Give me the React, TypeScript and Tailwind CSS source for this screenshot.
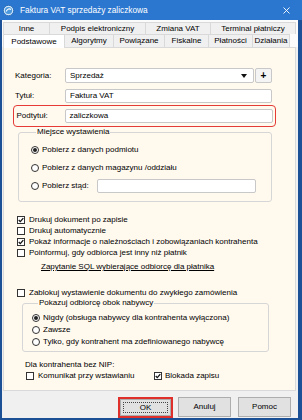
import React from "react";

const Check = ({ checked }: { checked?: boolean }) => (
  <span className="w-[8px] h-[8px] border border-[#333] bg-white flex items-center justify-center shrink-0">
    {checked && (
      <svg width="6" height="6" viewBox="0 0 6 6">
        <path d="M0.7 3 L2.3 4.6 L5.3 1.1" fill="none" stroke="#111" strokeWidth="1.3" />
      </svg>
    )}
  </span>
);

const Radio = ({ checked }: { checked?: boolean }) => (
  <span className="w-[8px] h-[8px] rounded-full border border-[#333] bg-white flex items-center justify-center shrink-0">
    {checked && <span className="w-[4px] h-[4px] rounded-full bg-[#222]" />}
  </span>
);

const Tab = ({ label, w, last, active }: { label: string; w: string; last?: boolean; active?: boolean }) => (
  <div
    className={
      "flex items-center justify-center border-t border-l border-[#d9d9d9] " +
      w +
      (last ? " border-r" : "") +
      (active ? " h-[14px] bg-white relative z-10" : " h-full bg-[#f0f0f0]")
    }
  >
    {label}
  </div>
);

const Button = ({ label, focused }: { label: string; focused?: boolean }) => (
  <div
    className={
      "bg-[#e1e1e1] border border-[#adadad] flex " +
      (focused ? "w-[51px] h-[17px] p-[2px]" : "w-[53px] h-[20px]")
    }
  >
    <div className={"flex-1 flex items-center justify-center " + (focused ? "border border-dotted border-[#444]" : "")}>
      {label}
    </div>
  </div>
);

export default function App() {
  return (
    <div className="w-[302px] h-[420px] bg-[#1b4f96] flex flex-col font-['Liberation_Sans',Arial,sans-serif] text-[8px] leading-none text-black">
      {/* title bar */}
      <div className="h-[20px] bg-[#2b77d0] flex items-center pl-[3px] pr-[12px] text-white">
        <svg width="11" height="11" viewBox="0 0 11 11">
          <circle cx="5.5" cy="5.5" r="5.2" fill="#cfe6fb" stroke="#1d5ea8" strokeWidth="0.8" />
          <circle cx="5.5" cy="5.5" r="3.6" fill="#4a97dc" />
          <path d="M3 6.5 Q5.5 2.5 8 4.5" fill="none" stroke="#fff" strokeWidth="1.1" />
        </svg>
        <span className="ml-[6px] text-[8.3px]">Faktura VAT sprzedaży zaliczkowa</span>
        <svg className="ml-auto" width="7" height="7" viewBox="0 0 7 7">
          <path d="M0.5 0.5 L6.5 6.5 M6.5 0.5 L0.5 6.5" stroke="#fff" strokeWidth="0.9" />
        </svg>
      </div>

      <div className="flex-1 ml-[2px] mr-[4px] mb-[2px] bg-[#f0f0f0] flex flex-col">
        {/* tabs */}
        <div className="h-[27px] bg-[#fbfbfb] pl-[1px] pt-[2px] flex flex-col">
          <div className="h-[12px] flex">
            <Tab label="Inne" w="w-[46px]" />
            <Tab label="Podpis elektroniczny" w="w-[96px]" />
            <Tab label="Zmiana VAT" w="w-[65px]" />
            <Tab label="Terminal płatniczy" w="w-[86px]" last />
          </div>
          <div className="h-[13px] flex items-start">
            <Tab label="Podstawowe" w="w-[61px]" active />
            <Tab label="Algorytmy" w="w-[49px]" />
            <Tab label="Powiązane" w="w-[51px]" />
            <Tab label="Fiskalne" w="w-[44px]" />
            <Tab label="Płatności" w="w-[44px]" />
            <Tab label="Działania" w="w-[38px]" last />
          </div>
        </div>

        {/* panel */}
        <div className="ml-[1px] mr-[2px] h-[344px] border border-[#d9d9d9] bg-[#fff9ee] flex flex-col">
          <div className="ml-[9px] w-[263px] flex flex-col">
            <div className="mt-[20px] h-[15px] flex items-center pr-[4px]">
              <div className="w-[52px] pl-[2px]">Kategoria:</div>
              <div className="flex-1 h-full bg-white border border-[#c8c8c8] rounded-[2px] flex items-center pl-[4px] pr-[6px]">
                <span>Sprzedaż</span>
                <svg className="ml-auto" width="6" height="4" viewBox="0 0 6 4">
                  <path d="M0 0 H6 L3 4 Z" fill="#111" />
                </svg>
              </div>
              <div className="ml-[1px] w-[17px] h-full bg-[#f4f4f4] border border-[#c8c8c8] rounded-[2px] flex items-center justify-center font-bold text-[10px]">
                +
              </div>
            </div>

            <div className="mt-[6px] h-[14px] flex items-center pr-[4px]">
              <div className="w-[52px] pl-[2px]">Tytuł:</div>
              <div className="flex-1 h-full bg-white border border-[#c8c8c8] rounded-[2px] flex items-center pl-[4px]">
                Faktura VAT
              </div>
            </div>

            <div className="mt-[2px] h-[22px] flex items-center border-[1.5px] border-[#e53a35] rounded-[4px] pr-[2.5px]">
              <div className="w-[50.5px] pl-[2.5px]">Podtytuł:</div>
              <div className="flex-1 h-[14px] bg-white border border-[#c8c8c8] rounded-[2px] flex items-center pl-[4px]">
                zaliczkowa
              </div>
            </div>

            <fieldset className="ml-[5px] mr-[4px] border border-[#d6d6d6] rounded-[3px] pl-[12px] pr-[15px] pt-[6px] pb-[8px] flex flex-col gap-[4px]">
              <legend className="ml-[5px] px-[1px] leading-[10px]">Miejsce wystawienia</legend>
              <div className="h-[14px] flex items-center gap-[3px]">
                <Radio checked />
                <span>Pobierz z danych podmiotu</span>
              </div>
              <div className="h-[14px] flex items-center gap-[3px]">
                <Radio />
                <span>Pobierz z danych magazynu /oddziału</span>
              </div>
              <div className="h-[14px] flex items-center gap-[3px]">
                <Radio />
                <span>Pobierz stąd:</span>
                <div className="ml-auto w-[159px] h-full bg-white border border-[#c8c8c8] rounded-[2px]" />
              </div>
            </fieldset>

            <div className="mt-[12px] pl-[4px] flex flex-col">
              <div className="h-[11px] flex items-center gap-[4px]">
                <Check checked />
                <span>Drukuj dokument po zapisie</span>
              </div>
              <div className="h-[11px] flex items-center gap-[4px]">
                <Check />
                <span>Drukuj automatycznie</span>
              </div>
              <div className="h-[11px] flex items-center gap-[4px]">
                <Check checked />
                <span>Pokaż informacje o należnościach i zobowiązaniach kontrahenta</span>
              </div>
              <div className="h-[11px] flex items-center gap-[4px]">
                <Check />
                <span>Poinformuj, gdy odbiorca jest inny niż płatnik</span>
              </div>
            </div>

            <div className="mt-[4px] h-[10px] pl-[28px] flex items-center">
              <span className="underline">Zapytanie SQL wybierające odbiorcę dla płatnika</span>
            </div>

            <div className="mt-[16px] h-[10px] pl-[4px] flex items-center gap-[4px]">
              <Check />
              <span>Zablokuj wystawienie dokumentu do zwykłego zamówienia</span>
            </div>

            <fieldset className="ml-[9px] mr-[7px] border border-[#d6d6d6] rounded-[3px] pl-[9px] pt-[4px] pb-[3px] flex flex-col">
              <legend className="ml-[6px] px-[1px] leading-[10px]">Pokazuj odbiorcę obok nabywcy</legend>
              <div className="h-[12px] flex items-center gap-[3px]">
                <Radio checked />
                <span>Nigdy (obsługa nabywcy dla kontrahenta wyłączona)</span>
              </div>
              <div className="h-[12px] flex items-center gap-[3px]">
                <Radio />
                <span>Zawsze</span>
              </div>
              <div className="h-[12px] flex items-center gap-[3px]">
                <Radio />
                <span>Tylko, gdy kontrahent ma zdefiniowanego nabywcę</span>
              </div>
            </fieldset>

            <div className="mt-[8px] h-[10px] pl-[12px] flex items-center">Dla kontrahenta bez NIP:</div>
            <div className="h-[11px] pl-[13px] flex items-center">
              <div className="w-[128px] flex items-center gap-[4px]">
                <Check />
                <span>Komunikat przy wstawianiu</span>
              </div>
              <div className="flex items-center gap-[3px]">
                <Check checked />
                <span>Blokada zapisu</span>
              </div>
            </div>
          </div>
        </div>

        {/* buttons */}
        <div className="flex-1 flex items-start justify-end pt-[6px] pr-[7px]">
          <div className="border-2 border-[#e0302c]">
            <Button label="OK" focused />
          </div>
          <div className="ml-[5px]">
            <Button label="Anuluj" />
          </div>
          <div className="ml-[7px]">
            <Button label="Pomoc" />
          </div>
        </div>
      </div>
    </div>
  );
}
